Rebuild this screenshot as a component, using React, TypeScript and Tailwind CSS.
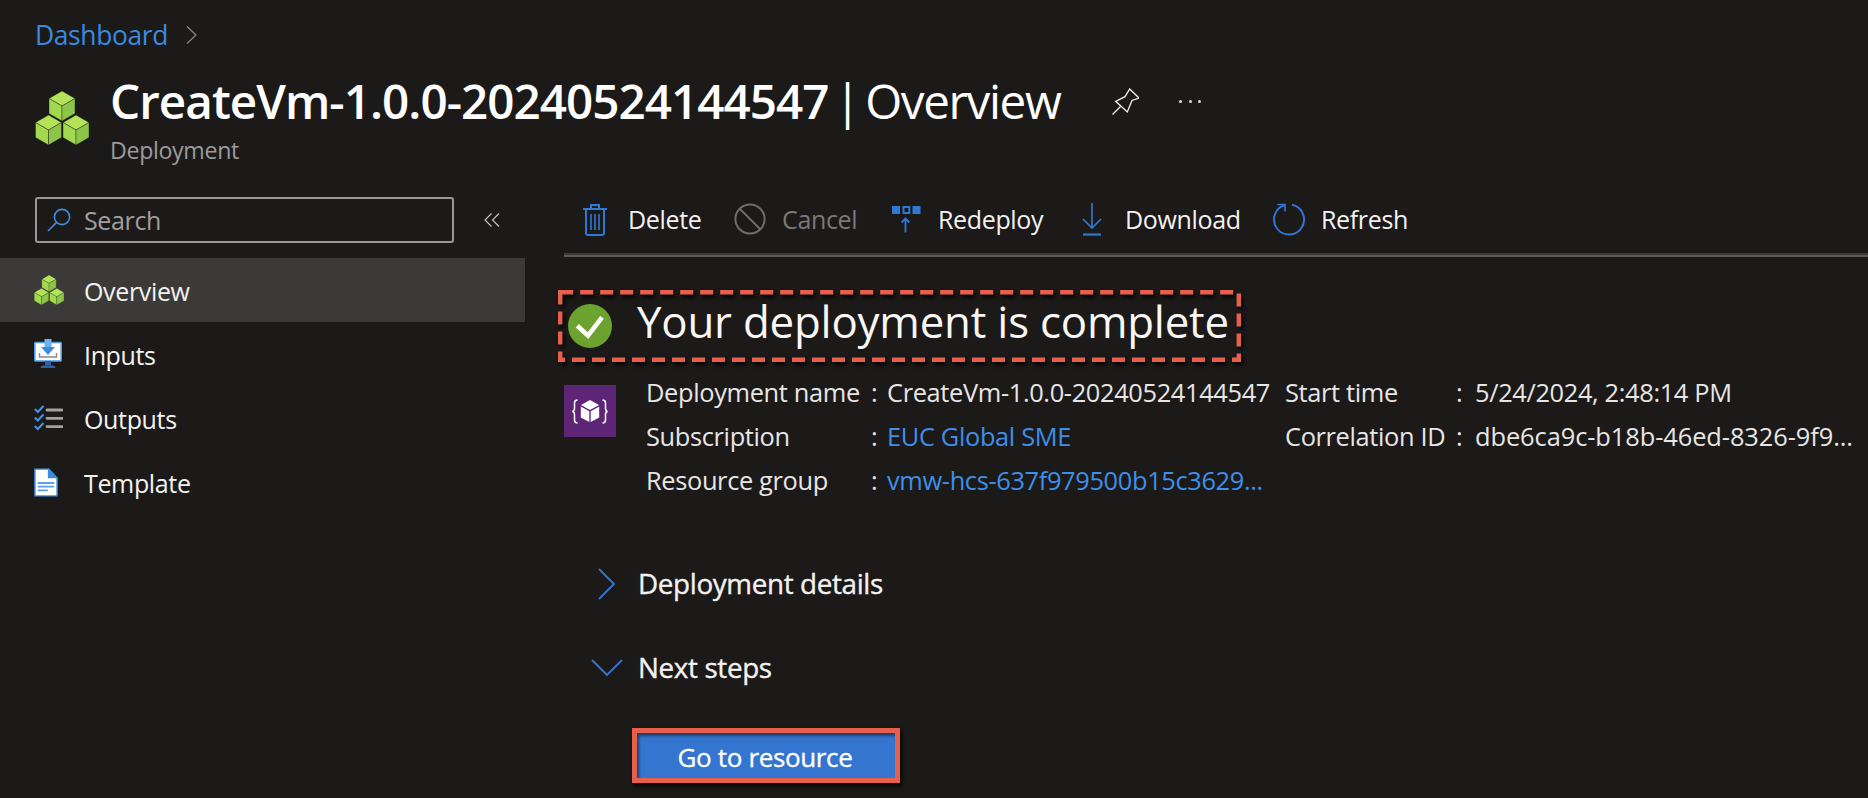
import React from "react";

const Cube = ({ cx, cy }: { cx: number; cy: number }) => {
  const a = 13, b = 7.5, h = 15;
  return (
    <g stroke="#1b1a19" strokeWidth="0.4">
      <polygon fill="#b4e35a" points={`${cx},${cy - h} ${cx + a},${cy - b} ${cx},${cy} ${cx - a},${cy - b}`} />
      <polygon fill="#a3d94f" points={`${cx - a},${cy - b} ${cx},${cy} ${cx},${cy + h} ${cx - a},${cy + b}`} />
      <polygon fill="#8dc548" points={`${cx + a},${cy - b} ${cx},${cy} ${cx},${cy + h} ${cx + a},${cy + b}`} />
    </g>
  );
};

const Cubes = ({ className }: { className: string }) => (
  <svg viewBox="0 0 54 54" className={className}>
    <Cube cx={27} cy={15} />
    <Cube cx={13.5} cy={39} />
    <Cube cx={41} cy={39} />
  </svg>
);

const SearchIcon = () => (
  <svg viewBox="0 0 24 24" className="w-6 h-6 shrink-0" fill="none" stroke="#3f8be0" strokeWidth="1.6">
    <circle cx="15" cy="9" r="7.6" />
    <path d="M9.6 14.4 1 23" />
  </svg>
);

const Trash = () => (
  <svg viewBox="0 0 26 33" className="w-[26px] h-[33px]" fill="none" stroke="#2f78d4" strokeWidth="2">
    <path d="M1 6h24M9 6V2h8v4M4 6v24q0 2 2 2h14q2 0 2-2V6" />
    <path d="M9 11v16M13 11v16M17 11v16" strokeWidth="1.6" />
  </svg>
);

const CancelIcon = () => (
  <svg viewBox="0 0 32 32" className="w-8 h-8" fill="none" stroke="#6e6d6c" strokeWidth="2">
    <circle cx="16" cy="16" r="14.6" />
    <path d="M6 6l20 20" />
  </svg>
);

const RedeployIcon = () => (
  <svg viewBox="0 0 29 27" className="w-[29px] h-[27px]" fill="none">
    <rect x="0" y="0" width="8" height="8" fill="#2f78d4" />
    <rect x="11.5" y="1" width="5.8" height="6" stroke="#2f78d4" strokeWidth="2" />
    <rect x="20.5" y="0" width="8" height="8" fill="#2f78d4" />
    <path d="M13.5 26.5V12.5M9.6 16.5l3.9-4 3.9 4" stroke="#2f78d4" strokeWidth="1.8" />
  </svg>
);

const DownloadIcon = () => (
  <svg viewBox="0 0 20 33" className="w-5 h-[33px]" fill="none" stroke="#2f78d4" strokeWidth="1.6">
    <path d="M10 0v25M1 16 10 25l9-9" />
    <path d="M1 31.5h18" strokeWidth="2.2" />
  </svg>
);

const RefreshIcon = () => (
  <svg viewBox="0 0 32 33" className="w-8 h-[33px]" fill="none" stroke="#2f78d4" strokeWidth="1.9">
    <path d="M19 1.8A15 15 0 1 1 11.5 2.2" />
    <path d="M4.3 1.5H12V8.5" strokeWidth="1.7" />
  </svg>
);

const InputsIcon = () => (
  <svg viewBox="0 0 28 30" className="w-[28px] h-[30px]">
    <rect x="0.8" y="3.5" width="26.4" height="18.5" fill="#fff" stroke="#4f9ae8" strokeWidth="1.6" rx="0.8" />
    <path d="M11 22h6v4.5h-6z" fill="#2f5fa8" />
    <path d="M6.5 29q0-2.6 3-2.6h9q3 0 3 2.6z" fill="#2f5fa8" />
    <path d="M10.5 0h7v8h-7z" fill="#6cb0f2" />
    <path d="M7 8h14l-7 8z" fill="#3f8be0" />
    <path d="M5.5 14v4h17v-4" fill="none" stroke="#8a8a8a" strokeWidth="1.5" />
  </svg>
);

const OutputsIcon = () => (
  <svg viewBox="0 0 29 26" className="w-[29px] h-[26px]" fill="none">
    <path d="M0.8 4l3 3L9.5 1M0.8 12.5l3 3 5.7-6M0.8 21l3 3 5.7-6" stroke="#4a8fe0" strokeWidth="2.1" />
    <path d="M13 5h15M13 13.3h15M13 21.6h15" stroke="#a3a2a1" strokeWidth="2.8" strokeLinecap="round" />
  </svg>
);

const TemplateIcon = () => (
  <svg viewBox="0 0 26 31" className="w-6 h-[29px]">
    <path d="M1 1h15l9 10v19H1z" fill="#fff" stroke="#3f8be0" strokeWidth="1.6" />
    <path d="M15 0h1l10 11H15z" fill="#3f8be0" />
    <path d="M4 16h18M4 20h18M4 24h11" stroke="#5ea0ec" strokeWidth="2" />
  </svg>
);

const ArmIcon = () => (
  <div className="w-[52px] h-[52px] bg-[#5e2577] flex items-center justify-center">
    <svg viewBox="0 0 36 25" className="w-9 h-[25px]" fill="none">
      <path d="M5.5 1Q2.5 1 2.5 4v5.5Q2.5 12 0.5 12.5 2.5 13 2.5 15.5V21q0 3 3 3M30.5 1q3 0 3 3v5.5q0 2.5 2 3-2 .5-2 3V21q0 3-3 3" stroke="#fff" strokeWidth="1.5" />
      <polygon points="18,1 27,6 18,11 9,6" fill="#fff" />
      <polygon points="8.8,7.5 17.3,12.3 17.3,23 8.8,18.5" fill="#fff" />
      <polygon points="27.2,7.5 18.7,12.3 18.7,23 27.2,18.5" fill="#fff" />
    </svg>
  </div>
);

const ToolItem = ({ icon, label, textW, ml, gap, muted }: { icon: React.ReactNode; label: string; textW: string; ml: string; gap: string; muted?: boolean }) => (
  <div className={`flex items-center ${ml} ${gap}`}>
    {icon}
    <span className={`${textW} whitespace-nowrap ${muted ? "text-[#7a7978]" : "text-[#f3f2f1]"}`}>{label}</span>
  </div>
);

const NavItem = ({ icon, label, active }: { icon: React.ReactNode; label: string; active?: boolean }) => (
  <div className={`h-16 flex items-center ${active ? "bg-[#3b3a39]" : ""}`}>
    <div className="w-[84px] pl-[34px] flex items-center">{icon}</div>
    <span className="text-[#f3f2f1] pt-[2px]">{label}</span>
  </div>
);

const InfoRow = ({ l1, v1, link1, l2, v2, v2Class }: { l1: string; v1: string; link1?: boolean; l2?: string; v2?: string; v2Class?: string }) => (
  <div className="h-11 flex items-center text-[#e8e6e4] text-[25.4px] whitespace-nowrap">
    <span className="w-[225px]">{l1}</span>
    <span className="w-4">:</span>
    <span className={`w-[398px] ${link1 ? "text-[#3f8fe8]" : ""}`}>{v1}</span>
    {l2 && <span className="w-[171px]">{l2}</span>}
    {l2 && <span className="w-[19px]">:</span>}
    {v2 && <span className={v2Class}>{v2}</span>}
  </div>
);

export default function App() {
  return (
    <div className="w-[1868px] h-[798px] overflow-hidden bg-[#1b1a19] text-[25px] leading-none tracking-[-0.35px] font-['Open_Sans','Noto_Sans',sans-serif]">
      <header className="pl-[35px]">
        <div className="h-[70px] flex items-center gap-[18px]">
          <span className="text-[#3a8ae0] text-[26.4px]">Dashboard</span>
          <svg viewBox="0 0 11 18" className="w-[11px] h-[18px]" fill="none" stroke="#8a8988" strokeWidth="1.2">
            <path d="M1 0.5 10 9 1 17.5" />
          </svg>
        </div>
        <div className="flex items-start gap-[21px] h-[103px]">
          <Cubes className="w-[54px] h-[54px] mt-[21px]" />
          <div className="mt-px">
            <div className="flex items-center h-[60px] text-white text-[47.6px] tracking-[-0.96px] whitespace-nowrap">
              <span className="font-semibold">CreateVm-1.0.0-20240524144547</span>
              <span className="ml-[6px] tracking-[-1.4px] [word-spacing:-5px]">| Overview</span>
              <svg viewBox="0 0 27 27" className="w-[27px] h-[27px] ml-[52px]" fill="none" stroke="#f3f2f1" strokeWidth="1.3">
                <path d="M17.7 1 27 10 20 12.5 15.3 24 3.7 13.3 13 8.7z" />
                <path d="M0.5 26.5 8.5 18.5" />
              </svg>
              <span className="ml-[40px] w-[22px] flex justify-between">
                <i className="w-[3px] h-[3px] bg-[#dcdbda] rounded-full" />
                <i className="w-[3px] h-[3px] bg-[#dcdbda] rounded-full" />
                <i className="w-[3px] h-[3px] bg-[#dcdbda] rounded-full" />
              </span>
            </div>
            <div className="mt-2 text-[#9d9b99] text-[23.2px]">Deployment</div>
          </div>
        </div>
      </header>

      <div className="flex mt-6">
        <aside className="w-[525px] shrink-0">
          <div className="flex items-center h-[46px] pl-[35px]">
            <div className="w-[419px] h-[46px] rounded-[3px] border-2 border-[#9a9998] flex items-center pl-[10px] gap-[13px] text-[#a19f9d]">
              <SearchIcon />
              <span>Search</span>
            </div>
            <svg viewBox="0 0 16 14" className="w-4 h-[14px] ml-[30px]" fill="none" stroke="#c8c6c4" strokeWidth="1.1">
              <path d="M7.5 0.5 1 7l6.5 6.5M15 0.5 8.5 7l6.5 6.5" />
            </svg>
          </div>
          <nav className="mt-[15px]">
            <NavItem active icon={<Cubes className="w-[30px] h-[30px]" />} label="Overview" />
            <NavItem icon={<InputsIcon />} label="Inputs" />
            <NavItem icon={<OutputsIcon />} label="Outputs" />
            <NavItem icon={<TemplateIcon />} label="Template" />
          </nav>
        </aside>

        <main className="flex-1 ml-[39px]">
          <div className="h-[60px] pb-[14px] border-b-2 border-[#5c5b5a] shadow-[inset_0_-2px_0_#3a3938] flex items-center pl-[18px]">
            <ToolItem icon={<Trash />} label="Delete" textW="w-[72px]" ml="" gap="gap-5" />
            <ToolItem icon={<CancelIcon />} label="Cancel" textW="w-[74px]" ml="ml-[34px]" gap="gap-[16px]" muted />
            <ToolItem icon={<RedeployIcon />} label="Redeploy" textW="w-[106px]" ml="ml-[36px]" gap="gap-[17px]" />
            <ToolItem icon={<DownloadIcon />} label="Download" textW="w-[116px]" ml="ml-[38px]" gap="gap-[23px]" />
            <ToolItem icon={<RefreshIcon />} label="Refresh" textW="w-[83px]" ml="ml-[32px]" gap="gap-4" />
          </div>

          <div className="mt-[33px] ml-[-6px] relative w-[683px] h-[72px] flex items-center pl-[10px] text-[#f8f7f6] text-[43.8px] tracking-[-0.2px] whitespace-nowrap">
            <svg viewBox="0 0 44 44" className="w-11 h-11 shrink-0">
              <circle cx="22" cy="22" r="22" fill="#6ba32e" />
              <path d="M9.3 21.7 20 31.7 34 13.3" fill="none" stroke="#fff" strokeWidth="4.6" />
            </svg>
            <span className="ml-[25px] -mt-[8px]">Your deployment is complete</span>
            <svg className="absolute inset-0 w-full h-full drop-shadow-[2px_3px_2px_rgba(0,0,0,0.9)]" fill="none">
              <rect x="2.2" y="2.2" width="678.6" height="67.6" stroke="#e8604c" strokeWidth="4.4" strokeDasharray="13 7" />
            </svg>
          </div>

          <div className="flex mt-2">
            <div className="pt-[15px]"><ArmIcon /></div>
            <div className="ml-[30px] pt-px">
              <InfoRow l1="Deployment name" v1="CreateVm-1.0.0-20240524144547" l2="Start time" v2="5/24/2024, 2:48:14 PM" />
              <InfoRow l1="Subscription" v1="EUC Global SME" link1 l2="Correlation ID" v2="dbe6ca9c-b18b-46ed-8326-9f9..." v2Class="tracking-[-0.07px]" />
              <InfoRow l1="Resource group" v1="vmw-hcs-637f979500b15c3629..." link1 />
            </div>
          </div>

          <div className="mt-[61px] pl-[27px] flex items-center h-10 text-[#f3f2f1] text-[27.8px] [-webkit-text-stroke:0.35px_#f3f2f1]">
            <svg viewBox="0 0 18 32" className="w-[18px] h-8 ml-[7px] mr-[22px]" fill="none" stroke="#2f78d4" strokeWidth="1.8">
              <path d="M1 1l15 15L1 31" />
            </svg>
            <span>Deployment details</span>
          </div>
          <div className="mt-11 pl-[27px] flex items-center h-10 text-[#f3f2f1] text-[27.8px] [-webkit-text-stroke:0.35px_#f3f2f1]">
            <svg viewBox="0 0 32 18" className="w-8 h-[18px] mr-[15px]" fill="none" stroke="#2f78d4" strokeWidth="1.8">
              <path d="M1 1l15 15L31 1" />
            </svg>
            <span>Next steps</span>
          </div>

          <div className="mt-10 ml-[68px] w-[268px] h-[55px] pt-[2px] pr-[2px] border-[5px] border-[#e8604c] bg-[#3375cf] shadow-[2px_3px_4px_rgba(0,0,0,0.8),inset_2px_3px_3px_rgba(0,0,0,0.45)] flex items-center justify-center text-white text-[26px] [-webkit-text-stroke:0.35px_#fff]">
            Go to resource
          </div>
        </main>
      </div>
    </div>
  );
}
